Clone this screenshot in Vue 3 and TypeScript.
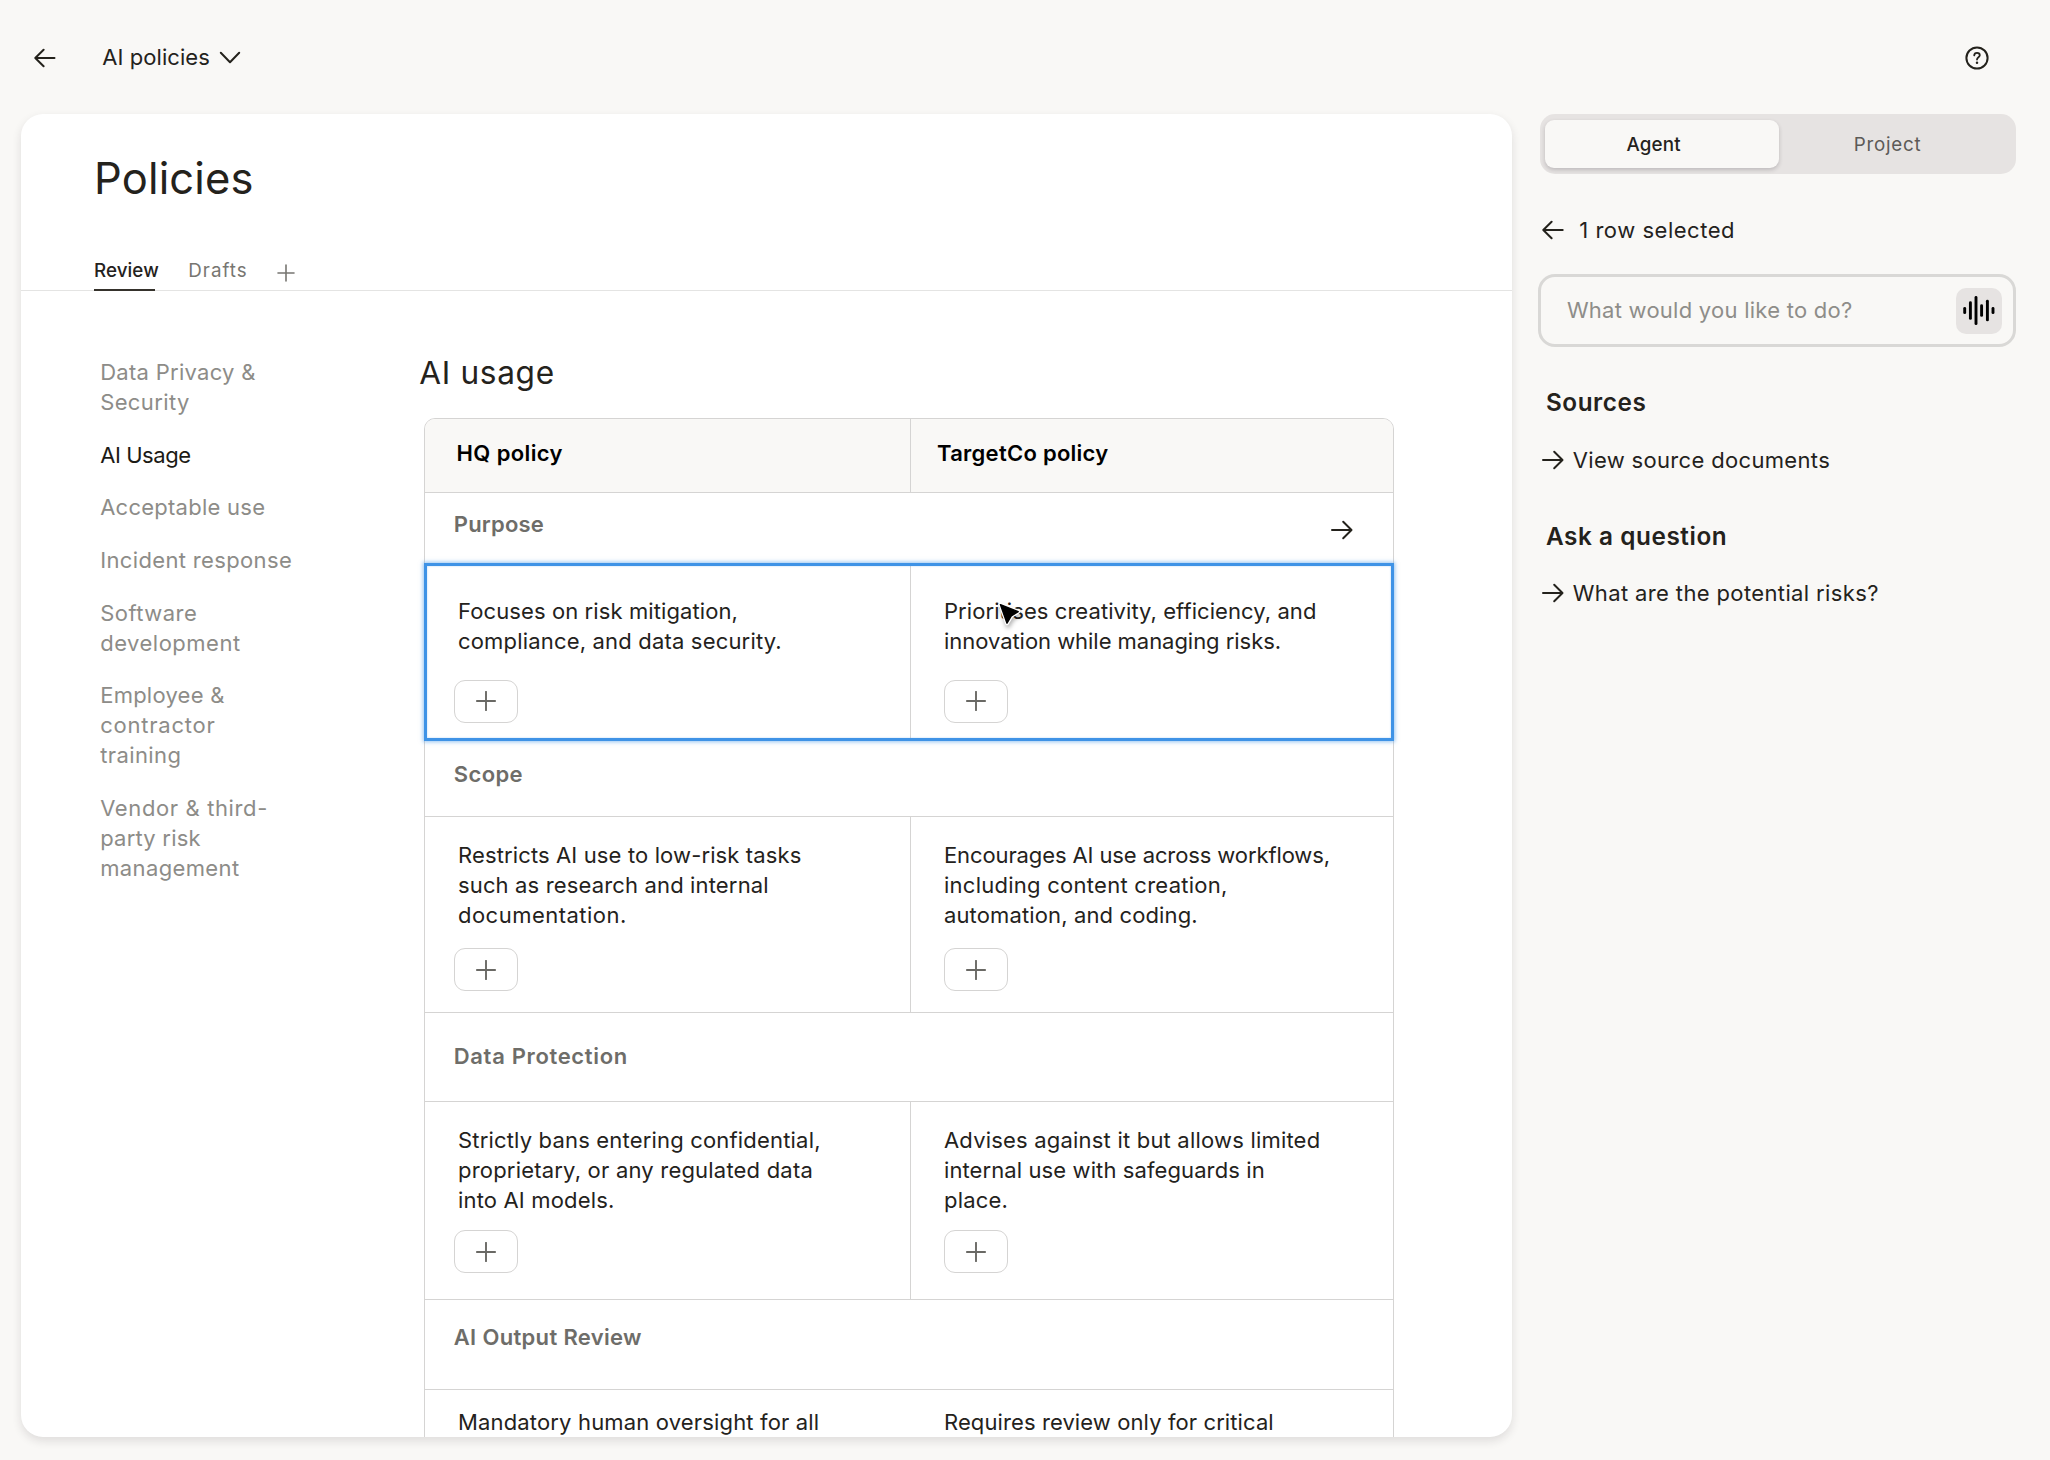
<script setup lang="ts">
interface Line { text: string; track: number }
interface Section {
  name: Line
  headPad: number
  headHeight: number
  bodyHeight: number
  textPad: number
  buttonGap: number
  selected?: boolean
  last?: boolean
  cells: Line[][]
}

const l = (text: string, track = 0): Line => ({ text, track })
const spacing = (line: Line) => ({ letterSpacing: `${line.track}px` })

const navItems: { active?: boolean; lines: Line[] }[] = [
  { lines: [l('Data Privacy &', 0.28), l('Security', 0.37)] },
  { active: true, lines: [l('AI Usage', -0.44)] },
  { lines: [l('Acceptable use', 0.25)] },
  { lines: [l('Incident response', 0.35)] },
  { lines: [l('Software', 0.46), l('development', 0.5)] },
  { lines: [l('Employee &', 0.24), l('contractor', 0.77), l('training', 0.4)] },
  { lines: [l('Vendor & third-', 0.62), l('party risk', 0.21), l('management', 0.37)] },
]

const sections: Section[] = [
  {
    name: l('Purpose', 0.2), headPad: 16.3, headHeight: 70, bodyHeight: 178, textPad: 33.3, buttonGap: 23.7, selected: true,
    cells: [
      [l('Focuses on risk mitigation,', 0.1), l('compliance, and data security.', 0.18)],
      [l('Prioritises creativity, efficiency, and', 0.07), l('innovation while managing risks.', -0.04)],
    ],
  },
  {
    name: l('Scope', 0.36), headPad: 17.7, headHeight: 76, bodyHeight: 196, textPad: 23.3, buttonGap: 18,
    cells: [
      [l('Restricts AI use to low-risk tasks', 0.13), l('such as research and internal', 0.15), l('documentation.', 0.48)],
      [l('Encourages AI use across workflows,', -0.11), l('including content creation,', 0.26), l('automation, and coding.', 0.13)],
    ],
  },
  {
    name: l('Data Protection', 0.66), headPad: 28.3, headHeight: 89, bodyHeight: 198, textPad: 23.4, buttonGap: 14.7,
    cells: [
      [l('Strictly bans entering confidential,', 0.18), l('proprietary, or any regulated data', 0.2), l('into AI models.', 0.17)],
      [l('Advises against it but allows limited', 0.2), l('internal use with safeguards in', 0.1), l('place.', 0.19)],
    ],
  },
  {
    name: l('AI Output Review', 0.33), headPad: 22.3, headHeight: 90, bodyHeight: 198, textPad: 17.4, buttonGap: 18, last: true,
    cells: [
      [l('Mandatory human oversight for all', 0.16)],
      [l('Requires review only for critical', 0.1)],
    ],
  },
]

const bars = [
  { x: 8.7, h: 7 }, { x: 14.4, h: 18.5 }, { x: 20, h: 29 },
  { x: 25.6, h: 12.5 }, { x: 31.4, h: 21.5 }, { x: 37, h: 7 },
]
</script>

<template>
  <div class="app">
    <header class="topbar">
      <svg class="back" width="22" height="20" viewBox="0 0 22 20"><path d="M20.5 10H1.6M9.6 1.7 1.3 10l8.3 8.3" /></svg>
      <span class="crumb">AI policies</span>
      <svg class="chevron" width="22" height="14" viewBox="0 0 22 14"><path d="M1.8 1.8 11 11.2l9.2-9.4" /></svg>
      <svg class="help" width="24" height="24" viewBox="0 0 24 24">
        <circle cx="12" cy="12" r="10.6" />
        <path d="M9.2 9.4c.1-1.6 1.3-2.5 2.8-2.5s2.8.9 2.8 2.4c0 1.9-2.8 2.1-2.8 4.3" />
        <circle class="dot" cx="12" cy="16.7" r="1.25" />
      </svg>
    </header>

    <div class="main">
      <main class="card">
        <h1>Policies</h1>
        <div class="tabs">
          <span class="tab active">Review</span>
          <span class="tab drafts">Drafts</span>
          <svg class="tab-plus" width="18" height="18" viewBox="0 0 18 18"><path d="M9 1v16M1 9h16" /></svg>
        </div>

        <div class="body">
          <nav>
            <a v-for="(item, i) in navItems" :key="i" :class="{ active: item.active }">
              <span v-for="line in item.lines" :key="line.text" class="line" :style="spacing(line)">{{ line.text }}</span>
            </a>
          </nav>

          <section class="content">
            <h2>AI usage</h2>
            <div class="table">
              <div class="thead">
                <div class="th hq">HQ policy</div>
                <div class="th target">TargetCo policy</div>
              </div>
              <template v-for="s in sections" :key="s.name.text">
                <div class="group" :class="{ ruled: !s.selected }" :style="{ height: `${s.headHeight}px`, paddingTop: `${s.headPad}px` }">
                  <span class="line" :style="spacing(s.name)">{{ s.name.text }}</span>
                  <svg v-if="s.selected" class="go" width="22" height="20" viewBox="0 0 22 20"><path d="M1 10h19.4M12.2 1.7l8.3 8.3-8.3 8.3" /></svg>
                </div>
                <div class="row" :class="{ selected: s.selected, last: s.last }" :style="{ height: `${s.bodyHeight}px` }">
                  <div v-for="(cell, c) in s.cells" :key="c" class="cell" :style="{ paddingTop: `${s.textPad}px` }">
                    <span v-for="line in cell" :key="line.text" class="line" :style="spacing(line)">{{ line.text }}</span>
                    <button v-if="!s.last" class="add" :style="{ marginTop: `${s.buttonGap}px` }">
                      <svg width="20" height="20" viewBox="0 0 20 20"><path d="M10 .8v18.4M.8 10h18.4" /></svg>
                    </button>
                    <svg v-if="s.selected && c === 1" class="cursor" width="28" height="30" viewBox="0 0 28 30">
                      <path class="halo" d="M3.4 3.6 21.2 10.7 14.3 14.9 10 22.2Z" />
                      <path d="M3.4 3.6 21.2 10.7 14.3 14.9 10 22.2Z" />
                    </svg>
                  </div>
                </div>
              </template>
            </div>
          </section>
        </div>
      </main>

      <aside>
        <div class="segmented">
          <div class="seg on">Agent</div>
          <div class="seg">Project</div>
        </div>
        <div class="selection">
          <svg class="arrow" width="22" height="20" viewBox="0 0 22 20"><path d="M20.7 10H1.6M9.6 1.7 1.3 10l8.3 8.3" /></svg>
          <span>1 row selected</span>
        </div>
        <div class="prompt">
          <span>What would you like to do?</span>
          <button class="mic">
            <svg width="46" height="46" viewBox="0 0 46 46">
              <rect v-for="b in bars" :key="b.x" :x="b.x - 1.45" :y="22.6 - b.h / 2" width="2.9" :height="b.h" rx="1.45" />
            </svg>
          </button>
        </div>
        <h3>Sources</h3>
        <div class="link sources-link">
          <svg class="arrow" width="22" height="20" viewBox="0 0 22 20"><path d="M1 10h19.4M12.2 1.7l8.3 8.3-8.3 8.3" /></svg>
          <span>View source documents</span>
        </div>
        <h3 class="ask">Ask a question</h3>
        <div class="link ask-link">
          <svg class="arrow" width="22" height="20" viewBox="0 0 22 20"><path d="M1 10h19.4M12.2 1.7l8.3 8.3-8.3 8.3" /></svg>
          <span>What are the potential risks?</span>
        </div>
      </aside>
    </div>
  </div>
</template>

<style>
body { margin: 0; background: #f9f8f6; }
</style>

<style scoped>
.app {
  width: 2050px;
  height: 1460px;
  overflow: hidden;
  display: flex;
  flex-direction: column;
  background: #f9f8f6;
  color: #24221c;
  font-family: Inter, "Liberation Sans", sans-serif;
  font-size: 22px;
  line-height: 30px;
}
.app * { box-sizing: border-box; }
svg { display: block; flex: none; fill: none; stroke: #24221c; stroke-width: 2; stroke-linecap: round; stroke-linejoin: round; }
h1, h2, h3 { margin: 0; font-weight: 400; }
button { padding: 0; border: 0; font: inherit; }
.line { display: block; white-space: nowrap; }

.topbar { height: 114px; flex: none; display: flex; align-items: center; padding: 3px 60.7px 2px 34px; }
.crumb { margin: -2px 0 0 46.3px; letter-spacing: 0.06px; }
.chevron { margin-left: 9px; }
.help { margin-left: auto; }
.help path { stroke-width: 1.8; }
.help .dot { fill: #24221c; stroke: none; }

.main { display: flex; }
.card {
  width: 1490.5px;
  height: 1323px;
  flex: none;
  margin-left: 21px;
  background: #fff;
  border-radius: 22px;
  overflow: hidden;
  box-shadow: 0 4px 10px rgba(30, 25, 35, 0.12);
}
h1 { padding: 38px 0 0 73px; font-size: 43.5px; line-height: 52px; letter-spacing: 0.16px; }
.tabs { display: flex; height: 87px; padding: 55px 0 0 73px; border-bottom: 1px solid #e4e4e3; font-size: 18.8px; line-height: 24px; }
.tab { position: relative; width: 94.3px; color: #777671; letter-spacing: 1px; }
.tab.active { color: #24221c; font-weight: 500; letter-spacing: 0.06px; }
.tab.active::after { content: ""; position: absolute; left: 0; bottom: -1px; width: 61px; height: 2px; background: #35322c; }
.tab-plus { margin: 4.5px 0 0 -5.5px; stroke: #777671; stroke-width: 1.6; }

.body { display: flex; }
nav { width: 321px; padding: 65.9px 0 0 79.2px; display: flex; flex-direction: column; gap: 22.7px; margin-right: 77.3px; color: #8d8c88; }
nav .active { color: #1c1a15; }
.content { padding-top: 63.2px; }
h2 { font-size: 31.6px; line-height: 38px; letter-spacing: 0.67px; }
.table { width: 970px; margin: 25.8px 0 0 4.7px; border: 1px solid #d5d4d3; border-radius: 11px 11px 0 0; }
.thead { display: flex; height: 74px; background: #f9f8f6; border-bottom: 1px solid #d5d4d3; border-radius: 10px 10px 0 0; color: #000; font-weight: 600; }
.th { padding-top: 19.3px; }
.hq { width: 486px; padding-left: 31.6px; border-right: 1px solid #d5d4d3; letter-spacing: 0.38px; }
.target { padding-left: 26px; letter-spacing: 0.27px; }
.group { display: flex; justify-content: space-between; padding-left: 28.8px; padding-right: 40px; color: #6e6d69; font-weight: 600; }
.group.ruled { border-bottom: 1px solid #d5d4d3; }
.go { margin-top: 11px; }
.row { display: flex; border-bottom: 1px solid #d5d4d3; }
.row.last { border-bottom: 0; }
.row.selected { position: relative; border-bottom: 0; }
.row.selected::after {
  content: "";
  position: absolute;
  inset: 0 -1px 0 -1px;
  border: 3px solid #3f93e6;
  box-shadow: 0 0 4px 1px rgba(63, 147, 230, 0.55), inset 0 0 2px rgba(63, 147, 230, 0.4);
}
.cell { position: relative; padding-left: 33px; flex: 1; }
.cell:first-child { flex: none; width: 486px; border-right: 1px solid #d5d4d3; }
.last .cell:first-child { border-right-color: transparent; }
.add { display: flex; align-items: center; justify-content: center; width: 64px; height: 43px; background: #fff; border: 1px solid #d5d4d3; border-radius: 11px; }
.cell:first-child .add { margin-left: -4px; }
.add svg { stroke: #6a6965; stroke-width: 1.9; }
.cursor { position: absolute; left: 86px; top: 38.5px; filter: drop-shadow(1px 3px 2px rgba(0, 0, 0, 0.3)); }
.cursor path { fill: #000; stroke: #000; stroke-width: 1.4; }
.cursor .halo { stroke: #fff; stroke-width: 4; }

aside { width: 478.3px; margin-left: 26.4px; }
.segmented { display: flex; height: 60px; margin-left: 2px; padding: 6px 5.5px; background: #e6e3e2; border-radius: 15px; font-size: 18.8px; line-height: 24px; }
.seg { flex: 1; padding: 12.5px 15px 0 0; text-align: center; color: #5c5a57; letter-spacing: 0.73px; }
.seg.on { flex: none; width: 234px; padding-right: 17.5px; background: #f9f8f6; border-radius: 9px; color: #24221c; font-weight: 500; letter-spacing: 0.14px; box-shadow: 0 2px 4px rgba(30, 25, 35, 0.2); }
.selection, .link { display: flex; align-items: center; padding-left: 4.3px; }
.selection { margin-top: 41px; letter-spacing: 0.53px; }
.selection span { margin-left: 15px; }
.prompt { display: flex; justify-content: space-between; height: 73px; margin-top: 28.7px; padding: 11px 11px 0 26px; border: 3px solid #d9d8d6; border-radius: 17px; color: #8e8d89; letter-spacing: 0.25px; }
.prompt span { padding-top: 7.5px; }
.mic { width: 46px; height: 46px; border-radius: 10px; background: #e6e3e2; }
.mic svg { fill: #000; stroke: none; }
h3 { margin: 40.5px 0 0 8px; font-size: 24.3px; font-weight: 600; letter-spacing: 0.58px; }
.link span { margin-left: 8.6px; }
.sources-link { margin-top: 28.1px; letter-spacing: 0.33px; }
.ask { margin-top: 46.2px; }
.ask-link { margin-top: 26.5px; letter-spacing: 0.37px; }
</style>
